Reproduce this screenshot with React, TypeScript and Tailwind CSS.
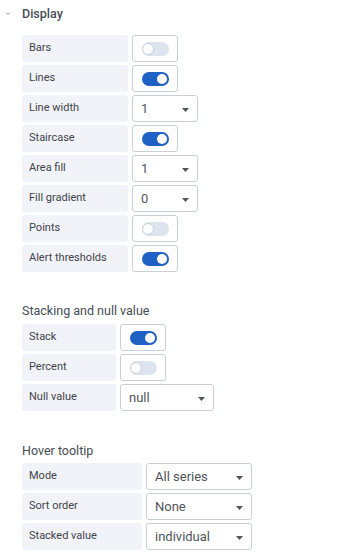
import { ReactNode } from "react";

function Toggle({ on }: { on: boolean }) {
  return (
    <div className="flex h-[27px] w-[46px] items-center justify-center rounded-[3px] border border-[#c7d0d9] bg-white">
      {on ? (
        <div className="flex h-[14px] w-[27px] items-center justify-end rounded-full bg-[#1f60c4] pr-[2px]">
          <div className="h-[10px] w-[10px] rounded-full bg-white" />
        </div>
      ) : (
        <div className="flex h-[14px] w-[27px] items-center rounded-full bg-[#dde4ed]">
          <div className="h-[12px] w-[12px] rounded-full border border-[#c7d0d9] bg-white" />
        </div>
      )}
    </div>
  );
}

function Select({ value, w }: { value: string; w: string }) {
  return (
    <div className={`flex h-[27px] items-center justify-between rounded-[3px] border border-[#c7d0d9] bg-white pl-[8px] pr-[8px] text-[13px] text-[#52545c] ${w}`}>
      <span>{value}</span>
      <svg width="7" height="4" viewBox="0 0 7 4" className="mt-[2px]">
        <path d="M0 0h7L3.5 4z" fill="#52545c" />
      </svg>
    </div>
  );
}

function Row({ label, lw, children }: { label: string; lw: string; children: ReactNode }) {
  return (
    <div className="flex gap-[4px]">
      <div className={`flex h-[27px] items-center rounded-[3px] bg-[#f1f3f8] pl-[7px] text-[11px] font-normal text-[#3f434a] ${lw}`}>
        {label}
      </div>
      {children}
    </div>
  );
}

export default function App() {
  const dw = "w-[106px]";
  const sw = "w-[94px]";
  const hw = "w-[120px]";
  return (
    <div className="h-[558px] w-[338px] bg-white font-['Roboto',sans-serif]">
      <div className="flex items-center pt-[5px] leading-[18px]">
        <svg width="22" height="16" viewBox="0 0 22 16">
          <path d="M6 6.5l2 2 2-2" stroke="#8e9299" strokeWidth="1" fill="none" />
        </svg>
        <span className="text-[12.5px] font-medium text-[#464c54]">Display</span>
      </div>
      <div className="mt-[12px] flex flex-col gap-[3px] pl-[22px]">
        <Row label="Bars" lw={dw}><Toggle on={false} /></Row>
        <Row label="Lines" lw={dw}><Toggle on /></Row>
        <Row label="Line width" lw={dw}><Select value="1" w="w-[66px]" /></Row>
        <Row label="Staircase" lw={dw}><Toggle on /></Row>
        <Row label="Area fill" lw={dw}><Select value="1" w="w-[66px]" /></Row>
        <Row label="Fill gradient" lw={dw}><Select value="0" w="w-[66px]" /></Row>
        <Row label="Points" lw={dw}><Toggle on={false} /></Row>
        <Row label="Alert thresholds" lw={dw}><Toggle on /></Row>
      </div>
      <div className="mt-[30px] pl-[22px] text-[12.5px] leading-[18px] text-[#464c54]">Stacking and null value</div>
      <div className="mt-[4px] flex flex-col gap-[3px] pl-[22px]">
        <Row label="Stack" lw={sw}><Toggle on /></Row>
        <Row label="Percent" lw={sw}><Toggle on={false} /></Row>
        <Row label="Null value" lw={sw}><Select value="null" w="w-[94px]" /></Row>
      </div>
      <div className="mt-[31px] pl-[22px] text-[12.5px] leading-[18px] text-[#464c54]">Hover tooltip</div>
      <div className="mt-[3px] flex flex-col gap-[3px] pl-[22px]">
        <Row label="Mode" lw={hw}><Select value="All series" w="w-[106px]" /></Row>
        <Row label="Sort order" lw={hw}><Select value="None" w="w-[106px]" /></Row>
        <Row label="Stacked value" lw={hw}><Select value="individual" w="w-[106px]" /></Row>
      </div>
    </div>
  );
}
